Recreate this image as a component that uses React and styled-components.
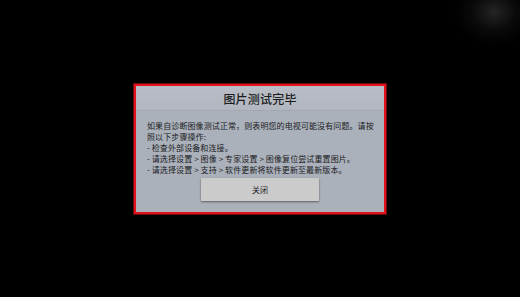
import React from 'react'
import styled, { createGlobalStyle } from 'styled-components'

const GlobalStyle = createGlobalStyle`
  html, body {
    margin: 0;
    padding: 0;
    background: #000;
  }
  body {
    font-family: "Noto Sans CJK SC", "Noto Sans", sans-serif;
  }
`

const Screen = styled.div`
  width: 520px;
  height: 297px;
  display: flex;
  align-items: center;
  justify-content: center;
  background:
    radial-gradient(ellipse 40px 34px at 494px 12px, rgba(36, 36, 36, 1), rgba(16, 16, 16, 0.6) 55%, rgba(0, 0, 0, 0) 100%),
    #000;
`

const Dialog = styled.div`
  width: 248px;
  height: 126px;
  border: 2px solid #e4121c;
  box-shadow: 0 0 0 1px #6a0a0e;
  background: #abb1ba;
  display: flex;
  flex-direction: column;
`

const Header = styled.div`
  height: 24px;
  display: flex;
  align-items: center;
  justify-content: center;
  background: linear-gradient(to bottom, #b9bec6, #b2b7bf);
  border-bottom: 1px solid #a3a9b2;
`

const Title = styled.div`
  font-size: 12px;
  font-weight: 500;
  letter-spacing: 0.2px;
  color: #1c1c1c;
  margin-top: 1px;
`

const Body = styled.div`
  padding: 9px 10px 0 11px;
  font-size: 8px;
  line-height: 11px;
  letter-spacing: 0.1px;
  color: #1a1b1e;
`

const Line = styled.div`
  white-space: nowrap;
`

const ButtonRow = styled.div`
  display: flex;
  justify-content: center;
  margin-top: 3px;
`

const Button = styled.div`
  width: 118px;
  height: 23px;
  display: flex;
  align-items: center;
  justify-content: center;
  background: #cbcbcc;
  box-shadow: 0 1px 2px rgba(60, 60, 60, 0.7);
  font-size: 8px;
  color: #1a1a1a;
`

export default function App() {
  return (
    <>
      <GlobalStyle />
      <Screen>
        <Dialog>
          <Header>
            <Title>图片测试完毕</Title>
          </Header>
          <Body>
            <Line>如果自诊断图像测试正常，则表明您的电视可能没有问题。请按</Line>
            <Line>照以下步骤操作:</Line>
            <Line>- 检查外部设备和连接。</Line>
            <Line>- 请选择设置 &gt; 图像 &gt; 专家设置 &gt; 图像复位尝试重置图片。</Line>
            <Line>- 请选择设置 &gt; 支持 &gt; 软件更新将软件更新至最新版本。</Line>
          </Body>
          <ButtonRow>
            <Button>关闭</Button>
          </ButtonRow>
        </Dialog>
      </Screen>
    </>
  )
}
